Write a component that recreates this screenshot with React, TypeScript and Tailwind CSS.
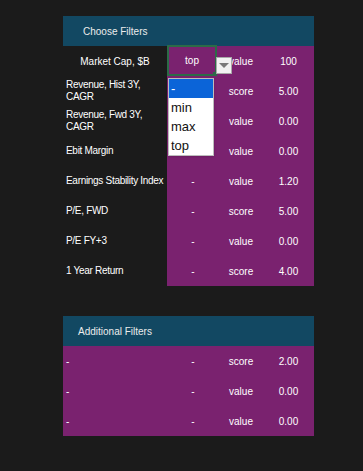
const FILTERS = [
  { label: "Revenue, Hist 3Y, CAGR", mode: "score", value: "5.00" },
  { label: "Revenue, Fwd 3Y, CAGR", mode: "value", value: "0.00" },
  { label: "Ebit Margin", mode: "value", value: "0.00" },
  { label: "Earnings Stability Index", mode: "value", value: "1.20" },
  { label: "P/E, FWD", mode: "score", value: "5.00" },
  { label: "P/E FY+3", mode: "value", value: "0.00" },
  { label: "1 Year Return", mode: "score", value: "4.00" },
];

const ADDITIONAL = [
  { mode: "score", value: "2.00" },
  { mode: "value", value: "0.00" },
  { mode: "value", value: "0.00" },
];

const OPTIONS = ["-", "min", "max", "top"];

function PanelHeader({ title, indent }: { title: string; indent: string }) {
  return (
    <div className={`h-[30px] bg-[#124862] flex items-center text-[10px] text-[#ececec] ${indent}`}>
      {title}
    </div>
  );
}

function Cells({ mode, value, first }: { mode: string; value: string; first?: React.ReactNode }) {
  return (
    <>
      <div className="w-[52px] h-full flex items-center justify-center relative">{first ?? "-"}</div>
      <div className="w-[44px] text-center">{mode}</div>
      <div className="w-[51px] text-center">{value}</div>
    </>
  );
}

function TopSelect() {
  return (
    <div className="absolute z-10 left-0 top-[-1px] w-[50px] h-[31px]">
      <div className="w-full h-full border-2 border-[#2c6b47] flex items-center justify-center text-white">
        top
      </div>
      {/* green corner handle */}
      <div className="absolute left-[46px] top-[27px] w-[4px] h-[4px] bg-[#2c6b47]" />
      {/* arrow button */}
      <div className="absolute left-[49px] top-[12px] w-[16px] h-[17px] bg-[#f2f2f2] border border-[#a9a9a9] flex items-center justify-center">
        <div className="w-0 h-0 border-l-[5px] border-r-[5px] border-t-[5px] border-l-transparent border-r-transparent border-t-[#7a7a7a]" />
      </div>
      {/* open list */}
      <div className="absolute left-[1px] top-[33px] w-[46px] bg-white border border-[#bdbdbd] shadow-sm text-[13px] text-[#111]">
        {OPTIONS.map((o, i) => (
          <div
            key={o}
            className={`h-[19px] pl-[2px] flex items-center leading-none ${i === 0 ? "bg-[#0b64d8] text-white" : ""}`}
          >
            {o}
          </div>
        ))}
      </div>
    </div>
  );
}

export default function App() {
  return (
    <div
      className="min-h-[471px] bg-[#1b1b1b] pt-[16px] pl-[63px]"
      style={{ fontFamily: '"Liberation Sans", Arial, sans-serif' }}
    >
      {/* Choose Filters */}
      <div className="w-[251px] text-[10px] text-white">
        <PanelHeader title="Choose Filters" indent="pl-[20px]" />
        <div className="relative z-10 flex h-[30px] items-center">
          <div className="w-[104px] text-center">Market Cap, $B</div>
          <div className="flex-1 h-full bg-[#7a226f] flex items-center">
            <Cells mode="value" value="100" first={<TopSelect />} />
          </div>
        </div>
        {FILTERS.map((f) => (
          <div key={f.label} className="flex h-[30px] items-center">
            <div className="w-[104px] pl-[3px] pr-[2px] leading-[12px] tracking-[-0.3px]">{f.label}</div>
            <div className="flex-1 h-full bg-[#7a226f] flex items-center">
              <Cells mode={f.mode} value={f.value} />
            </div>
          </div>
        ))}
      </div>

      {/* Additional Filters */}
      <div className="w-[251px] mt-[30px] text-[10px] text-white">
        <PanelHeader title="Additional Filters" indent="pl-[15px]" />
        <div className="bg-[#7a226f]">
          {ADDITIONAL.map((a, i) => (
            <div key={i} className="flex h-[30px] items-center">
              <div className="w-[104px] pl-[3px]">-</div>
              <Cells mode={a.mode} value={a.value} />
            </div>
          ))}
        </div>
      </div>
    </div>
  );
}
